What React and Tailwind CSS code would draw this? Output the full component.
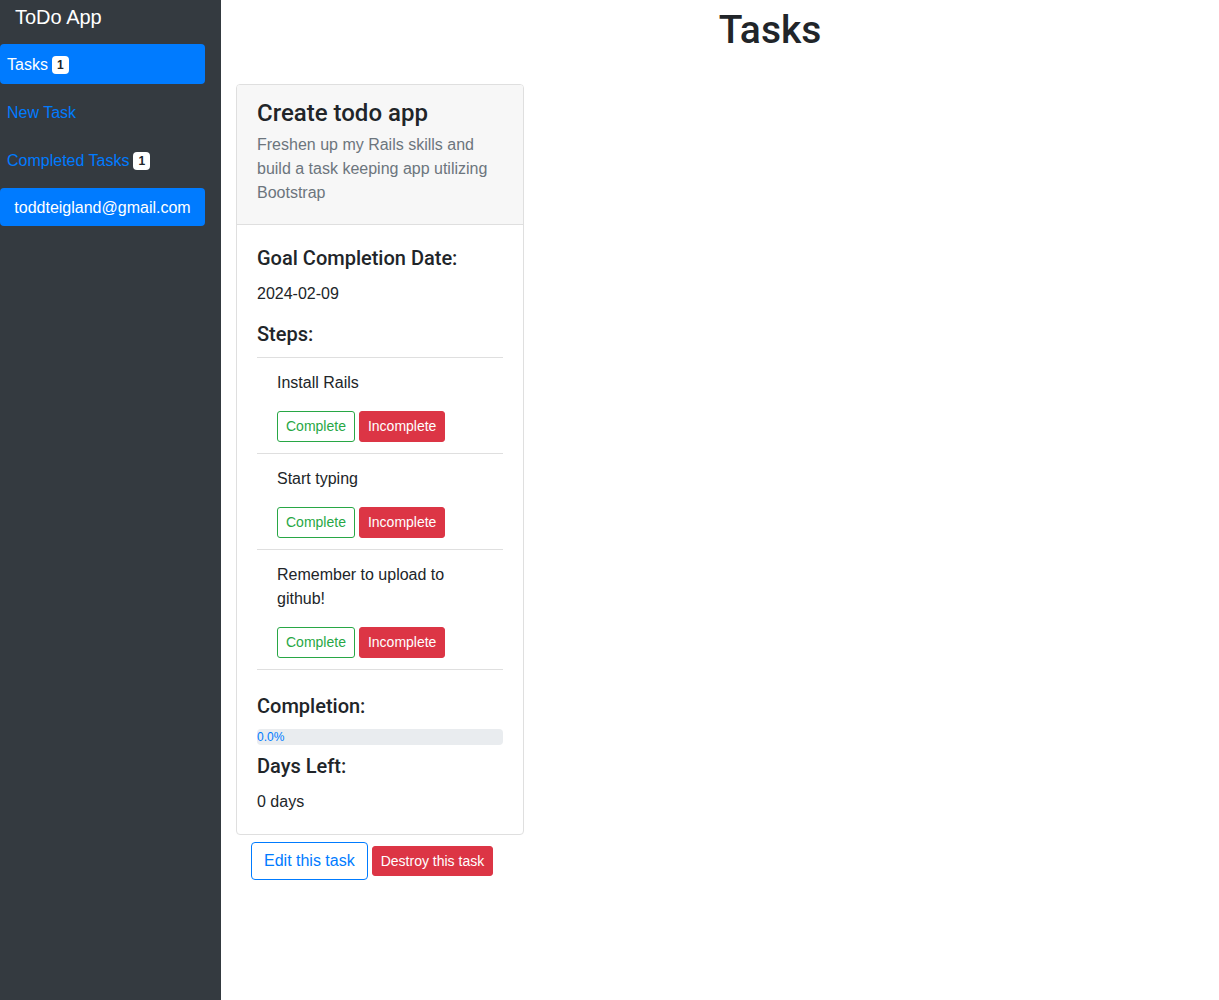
import React from "react";

const font = { fontFamily: '"Segoe UI", "Liberation Sans", Arial, sans-serif' };
const hfont = "font-['Roboto','Liberation_Sans',sans-serif] font-medium";

function Badge({ children }) {
  return (
    <span className="inline-flex items-center justify-center bg-white text-[#212529] text-[12px] font-bold leading-none rounded-[4px] h-[18px] px-[5px] ml-[4px]">
      {children}
    </span>
  );
}

function Step({ text }) {
  return (
    <div className="border-t border-[#dfdfdf] px-5 pt-[13px] pb-[11px]">
      <p className="text-[16px] leading-6 text-[#212529] mb-4">{text}</p>
      <div className="flex gap-[4px]">
        <button className="h-[31px] px-2 text-[14px] text-[#28a745] border border-[#28a745] rounded-[3px] bg-white">Complete</button>
        <button className="h-[31px] px-2 text-[14px] text-white bg-[#dc3545] border border-[#dc3545] rounded-[3px]">Incomplete</button>
      </div>
    </div>
  );
}

export default function App() {
  return (
    <div className="flex min-h-[1000px] bg-white text-[#212529]" style={font}>
      <aside className="w-[221px] shrink-0 bg-[#343a40]">
        <div className="pl-[15px] pt-[3px] text-[20px] leading-[28px] text-white">ToDo App</div>
        <nav className="mt-[13px] flex flex-col gap-[8px] pr-[16px]">
          <a className="flex items-center h-[40px] px-[7px] pt-[2px] bg-[#007bff] text-white text-[16px] rounded-[4px]">
            Tasks<Badge>1</Badge>
          </a>
          <a className="flex items-center h-[40px] px-[7px] pt-[2px] text-[#007bff] text-[16px]">New Task</a>
          <a className="flex items-center h-[40px] px-[7px] pt-[2px] text-[#007bff] text-[16px]">
            Completed Tasks<Badge>1</Badge>
          </a>
          <a className="flex items-center justify-center h-[38px] px-3 pt-[2px] bg-[#007bff] text-white text-[16px] rounded-[4px]">
            toddteigland@gmail.com
          </a>
        </nav>
      </aside>
      <main className="flex-1 px-[15px]">
        <h1 className={`pl-[100px] text-center text-[39px] leading-[48px] mt-[6px] ${hfont}`}>Tasks</h1>
        <div className="mt-[30px] w-[288px] border border-[#dfdfdf] rounded-[4px] overflow-hidden">
          <div className="bg-[#f7f7f7] border-b border-[#dfdfdf] px-5 pt-[14px] pb-[19px]">
            <h2 className={`text-[24px] leading-[29px] ${hfont}`}>Create todo app</h2>
            <p className="mt-[5px] text-[16px] leading-6 text-[#6c757d]">
              Freshen up my Rails skills and build a task keeping app utilizing Bootstrap
            </p>
          </div>
          <div className="px-5 pt-[21px] pb-5">
            <h5 className={`text-[20px] leading-6 ${hfont}`}>Goal Completion Date:</h5>
            <p className="mt-[12px] text-[16px] leading-6">2024-02-09</p>
            <h5 className={`mt-[16px] text-[20px] leading-6 ${hfont}`}>Steps:</h5>
            <div className="mt-[11px] border-b border-[#dfdfdf]">
              <Step text="Install Rails" />
              <Step text="Start typing" />
              <Step text="Remember to upload to github!" />
            </div>
            <h5 className={`mt-[24px] text-[20px] leading-6 ${hfont}`}>Completion:</h5>
            <div className="mt-[11px] h-[16px] bg-[#e9ecef] rounded-[4px] flex items-center">
              <span className="text-[12px] leading-[16px] text-[#007bff]">0.0%</span>
            </div>
            <h5 className={`mt-[9px] text-[20px] leading-6 ${hfont}`}>Days Left:</h5>
            <p className="mt-[12px] text-[16px] leading-6">0 days</p>
          </div>
        </div>
        <div className="mt-[7px] pl-[15px] flex items-center gap-[4px]">
          <button className="h-[38px] px-3 text-[16px] text-[#007bff] border border-[#007bff] rounded-[4px] bg-white">Edit this task</button>
          <button className="h-[30px] px-2 text-[14px] text-white bg-[#dc3545] border border-[#dc3545] rounded-[3px]">Destroy this task</button>
        </div>
      </main>
    </div>
  );
}
